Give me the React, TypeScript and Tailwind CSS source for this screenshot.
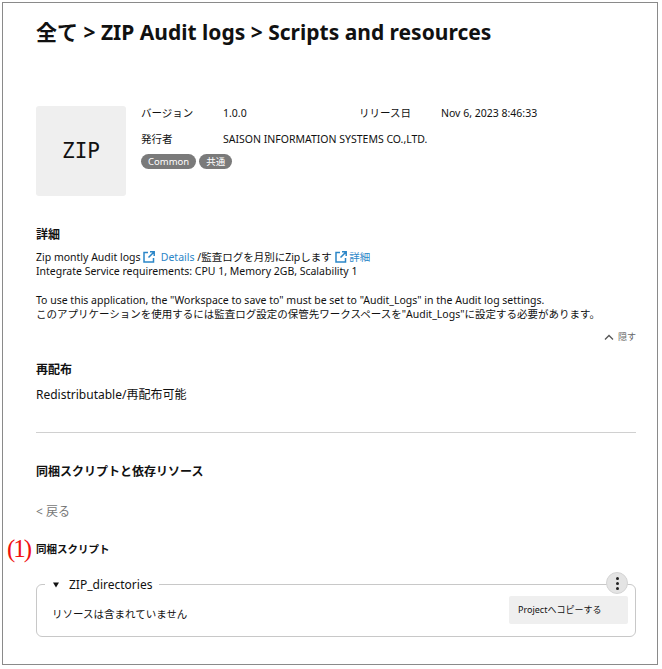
const font = "font-['Noto_Sans','Noto_Sans_CJK_JP',sans-serif]";

function ExternalIcon() {
  return (
    <svg width="12" height="12" viewBox="0 0 12 12" fill="none" stroke="#2b86c8" strokeWidth="1.5" className="inline-block align-[-2px]">
      <path d="M5 1.5H1v9.5h9.5V7" />
      <path d="M7 .8h4.2V5M11 1 5.5 6.5" />
    </svg>
  );
}

function Tag({ label }: { label: string }) {
  return (
    <span className="bg-[#7a7a7a] text-white text-[9.5px] leading-[15px] h-[15px] px-[7px] rounded-full">{label}</span>
  );
}

export default function App() {
  return (
    <div className={`${font} w-[662px] h-[669px] bg-white pt-[2px] pl-[2px] text-[#111]`}>
      <div className="w-[656px] h-[663px] border border-[#8a8a8a] pl-[33px] pr-[21px] relative">
        <h1 className="text-[21px] leading-[30px] font-bold mt-[14px]">全て &gt; ZIP Audit logs &gt; Scripts and resources</h1>

        <div className="flex mt-[59px] gap-[15px]">
          <div className="w-[90px] h-[90px] bg-[#efefef] rounded-[3px] flex items-center justify-center font-['DejaVu_Sans_Mono',monospace] text-[21px] pt-[2px]">ZIP</div>
          <div className="text-[10.5px] leading-[16px] -mt-[1px]">
            <div className="flex">
              <span className="w-[82px]">バージョン</span>
              <span className="w-[136px]">1.0.0</span>
              <span className="w-[82px]">リリース日</span>
              <span>Nov 6, 2023 8:46:33</span>
            </div>
            <div className="flex mt-[10px]">
              <span className="w-[82px]">発行者</span>
              <span>SAISON INFORMATION SYSTEMS CO.,LTD.</span>
            </div>
            <div className="flex gap-[3px] mt-[7px]">
              <Tag label="Common" />
              <Tag label="共通" />
            </div>
          </div>
        </div>

        <h2 className="text-[12px] leading-[18px] font-bold mt-[30px]">詳細</h2>
        <div className="text-[10.5px] leading-[14px] mt-[6px]">
          <p>
            Zip montly Audit logs <ExternalIcon /> <span className="text-[#2b86c8]">&nbsp;Details</span> /監査ログを月別にZipします <ExternalIcon /> <span className="text-[#2b86c8]">詳細</span>
          </p>
          <p>Integrate Service requirements: CPU 1, Memory 2GB, Scalability 1</p>
          <p className="mt-[15px]">To use this application, the "Workspace to save to" must be set to "Audit_Logs" in the Audit log settings.</p>
          <p>このアプリケーションを使用するには監査ログ設定の保管先ワークスペースを"Audit_Logs"に設定する必要があります。</p>
        </div>
        <div className="flex justify-end items-center gap-[4px] text-[9px] leading-[14px] text-[#666] mt-[9px]">
          <svg width="10" height="6" viewBox="0 0 10 6" fill="none" stroke="#555" strokeWidth="1.3"><path d="M1 5.5 5 1.5l4 4" /></svg>
          <span>隠す</span>
        </div>

        <h2 className="text-[12px] leading-[18px] font-bold mt-[17px]">再配布</h2>
        <p className="text-[12px] leading-[18px] mt-[7px]">Redistributable/再配布可能</p>
        <hr className="border-[#d0d0d0] mt-[28px]" />

        <h2 className="text-[12px] leading-[18px] font-bold mt-[30px]">同梱スクリプトと依存リソース</h2>
        <p className="text-[12px] leading-[18px] text-[#777] mt-[22px]">&lt; 戻る</p>
        <h3 className="text-[10.5px] leading-[16px] font-bold mt-[20px]">同梱スクリプト</h3>

        <div className="relative mt-[27px] h-[53px] border border-[#c8c8c8] rounded-[6px]">
          <div className="absolute -top-[8px] left-[8px] bg-white px-[7px] flex items-center gap-[9px] text-[12px] leading-[16px]">
            <svg width="8" height="6" viewBox="0 0 8 6" fill="#111"><path d="M1 .5h6L4 5.5z" /></svg>
            <span>ZIP_directories</span>
          </div>
          <div className="absolute -top-[13px] right-[7px] w-[22px] h-[22px] rounded-full bg-[#e4e4e4] border border-[#d4d4d4] flex flex-col items-center justify-center gap-[2px]">
            <span className="w-[3px] h-[3px] rounded-full bg-[#222]" />
            <span className="w-[3px] h-[3px] rounded-full bg-[#222]" />
            <span className="w-[3px] h-[3px] rounded-full bg-[#222]" />
          </div>
          <div className="absolute top-[11px] right-[7px] w-[119px] h-[28px] bg-[#efefef] rounded-[2px] flex items-center pl-[9px] text-[9px]">Projectへコピーする</div>
          <p className="text-[10.5px] leading-[16px] ml-[15px] mt-[21px]">リソースは含まれていません</p>
        </div>

        <span className="absolute left-[4px] top-[532px] text-[25px] leading-[28px] tracking-[-2px] text-[#f01010] font-['Liberation_Serif',serif]">(1)</span>
      </div>
    </div>
  );
}
